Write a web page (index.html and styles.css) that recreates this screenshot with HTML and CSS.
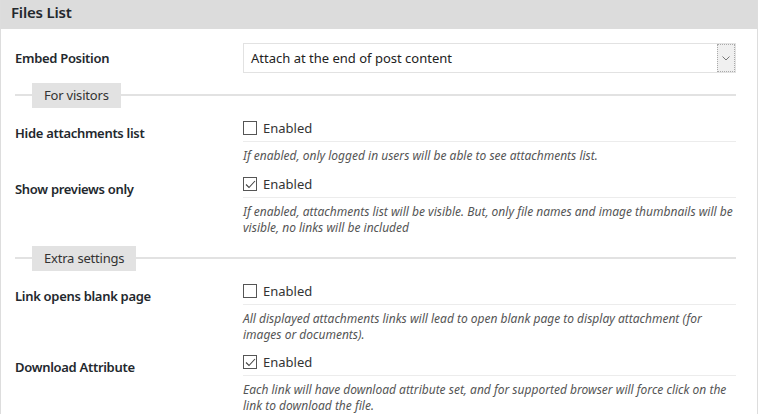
FILE: index.html
```html
<!DOCTYPE html>
<html lang="en">
<head>
  <meta charset="UTF-8">
  <meta name="viewport" content="width=device-width, initial-scale=1.0">
  <title>Files List</title>
  <link rel="stylesheet" href="styles.css">
</head>
<body>
  <div class="panel">
    <h2 class="panel-title">Files List</h2>

    <div class="panel-body">
      <div class="row">
        <div class="label">Embed Position</div>
        <div class="control">
          <div class="select">
            <span class="select-value">Attach at the end of post content</span>
            <span class="select-arrow">
              <svg width="8" height="5" viewBox="0 0 8 5"><path d="M0.5 0.5 L4 4 L7.5 0.5" fill="none" stroke="#777" stroke-width="1"/></svg>
            </span>
          </div>
        </div>
      </div>

      <div class="section"><span class="section-name">For visitors</span></div>

      <div class="row">
        <div class="label">Hide attachments list</div>
        <div class="control">
          <label class="check"><span class="box"></span>Enabled</label>
          <p class="desc">If enabled, only logged in users will be able to see attachments list.</p>
        </div>
      </div>

      <div class="row">
        <div class="label">Show previews only</div>
        <div class="control">
          <label class="check"><span class="box"><svg width="11" height="9" viewBox="0 0 11 9"><path d="M1 4.5 L4 7.5 L10 1" fill="none" stroke="#444" stroke-width="1.1"/></svg></span>Enabled</label>
          <p class="desc">If enabled, attachments list will be visible. But, only file names and image thumbnails will be visible, no links will be included</p>
        </div>
      </div>

      <div class="section"><span class="section-name">Extra settings</span></div>

      <div class="row tight">
        <div class="label">Link opens blank page</div>
        <div class="control">
          <label class="check"><span class="box"></span>Enabled</label>
          <p class="desc">All displayed attachments links will lead to open blank page to display attachment (for images or documents).</p>
        </div>
      </div>

      <div class="row last">
        <div class="label">Download Attribute</div>
        <div class="control">
          <label class="check"><span class="box"><svg width="11" height="9" viewBox="0 0 11 9"><path d="M1 4.5 L4 7.5 L10 1" fill="none" stroke="#444" stroke-width="1.1"/></svg></span>Enabled</label>
          <p class="desc">Each link will have download attribute set, and for supported browser will force click on the link to download the file.</p>
        </div>
      </div>
    </div>
  </div>
</body>
</html>
```

FILE: styles.css
```css
body {
  margin: 0;
  font-family: "Noto Sans", "Open Sans", Arial, sans-serif;
  color: #222;
  background-color: #fff;
}
.panel {
  border-left: 1px solid #ddd;
  border-right: 1px solid #ddd;
  width: 756px;
}
.panel-title {
  margin: 0;
  height: 29px;
  padding: 0 10px;
  background-color: #dcdcdc;
  font-size: 15px;
  font-weight: 600;
  line-height: 25px;
  letter-spacing: -0.2px;
  color: #23282d;
}
.panel-body {
  padding: 14px 21px 0 14px;
}
.row {
  display: grid;
  grid-template-columns: 228px 1fr;
  margin-bottom: 10px;
}
.row.tight {
  margin-bottom: 9px;
}
.row.last {
  margin-bottom: 0;
}
.label {
  font-size: 13px;
  font-weight: 600;
  letter-spacing: -0.3px;
  color: #23282d;
  padding-top: 5px;
  line-height: 20px;
}
.select {
  display: flex;
  height: 30px;
  box-sizing: border-box;
  border: 1px solid #e2e2e2;
  background-color: #fff;
}
.select-value {
  flex: 1;
  padding-left: 7px;
  font-size: 13px;
  line-height: 28px;
  color: #222;
}
.select-arrow {
  width: 16px;
  display: flex;
  align-items: center;
  justify-content: center;
  background-color: #f0f0f0;
  border: 1px dotted #aaa;
}
.section {
  position: relative;
  margin: 10px 0;
  padding-left: 17px;
}
.section::before {
  content: "";
  position: absolute;
  left: 0;
  right: 0;
  top: 11px;
  height: 2px;
  background-color: #e2e2e2;
}
.section-name {
  position: relative;
  display: inline-block;
  padding: 0 12px;
  height: 25px;
  line-height: 25px;
  font-size: 13px;
  letter-spacing: -0.2px;
  color: #333;
  background-color: #e2e2e2;
}
.check {
  display: flex;
  align-items: center;
  height: 20px;
  padding-bottom: 3px;
  border-bottom: 1px solid #ececec;
  font-size: 13px;
  color: #333;
}
.box {
  width: 14px;
  height: 14px;
  border: 1px solid #555;
  margin-right: 6px;
  display: flex;
  align-items: center;
  justify-content: center;
  box-sizing: border-box;
}
.desc {
  margin: 6px 0 0;
  font-size: 12px;
  font-style: italic;
  line-height: 16px;
  color: #555;
}
```
